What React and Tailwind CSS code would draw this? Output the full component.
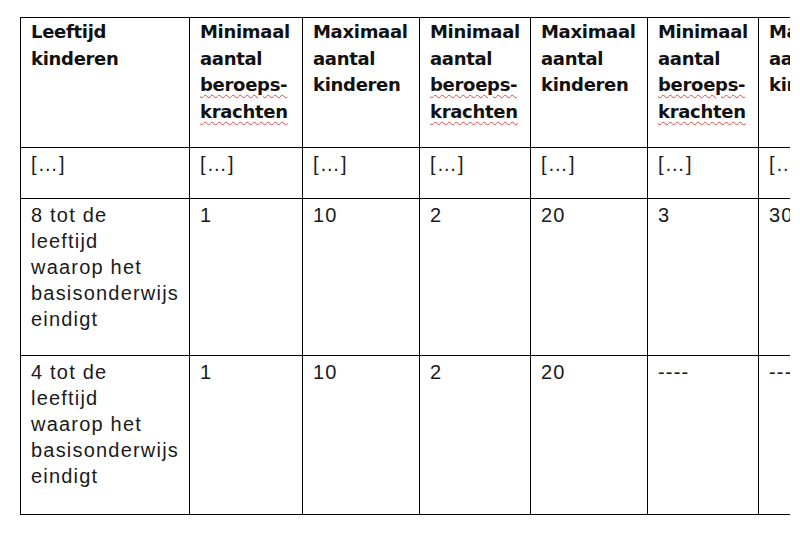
const cols = [169, 113, 117, 111, 117, 111, 113];

const headers = [
  ["Leeftijd", "kinderen"],
  ["Minimaal", "aantal", "beroeps-*", "krachten*"],
  ["Maximaal", "aantal", "kinderen"],
  ["Minimaal", "aantal", "beroeps-*", "krachten*"],
  ["Maximaal", "aantal", "kinderen"],
  ["Minimaal", "aantal", "beroeps-*", "krachten*"],
  ["Maximaal", "aantal", "kinderen"],
];

const rows = [
  { h: 51, cells: [["[…]"], ["[…]"], ["[…]"], ["[…]"], ["[…]"], ["[…]"], ["[…]"]] },
  {
    h: 157,
    cells: [
      ["8 tot de", "leeftijd", "waarop het", "basisonderwijs", "eindigt"],
      ["1"],
      ["10"],
      ["2"],
      ["20"],
      ["3"],
      ["30"],
    ],
  },
  {
    h: 159,
    cells: [
      ["4 tot de", "leeftijd", "waarop het", "basisonderwijs", "eindigt"],
      ["1"],
      ["10"],
      ["2"],
      ["20"],
      ["----"],
      ["----"],
    ],
  },
];

function HeadLine({ text }) {
  // trailing * marks a word with a spellcheck squiggle
  if (text.endsWith("*")) {
    return (
      <div>
        <span className="underline decoration-wavy decoration-[#e04848] decoration-[1px] underline-offset-[3px]">
          {text.slice(0, -1)}
        </span>
      </div>
    );
  }
  return <div>{text}</div>;
}

export default function App() {
  return (
    <div className="w-[800px] h-[542px] bg-white pl-[20px] pt-[17px]">
      <div className="w-[770px] overflow-hidden">
        <table
          className="table-fixed border-collapse text-[#111]"
          style={{ width: cols.reduce((a, b) => a + b, 0) }}
        >
          <colgroup>
            {cols.map((w, i) => (
              <col key={i} style={{ width: w }} />
            ))}
          </colgroup>
          <thead>
            <tr className="h-[130px]">
              {headers.map((lines, i) => (
                <th
                  key={i}
                  className="border-[1.5px] border-black align-top text-left px-[10px] pt-[1px] font-bold text-[18px] leading-[26.5px] font-['DejaVu_Sans',sans-serif] tracking-[-0.3px]"
                >
                  {lines.map((t, j) => (
                    <HeadLine key={j} text={t} />
                  ))}
                </th>
              ))}
            </tr>
          </thead>
          <tbody>
            {rows.map((r, i) => (
              <tr key={i} style={{ height: r.h }}>
                {r.cells.map((lines, j) => (
                  <td
                    key={j}
                    className="border-[1.5px] border-black align-top px-[10px] pt-[3px] text-[20px] leading-[26px] font-['Liberation_Sans',Arial,sans-serif] tracking-[1.2px] text-[#1a1a1a]"
                  >
                    {lines.map((t, k) => (
                      <div key={k}>{t}</div>
                    ))}
                  </td>
                ))}
              </tr>
            ))}
          </tbody>
        </table>
      </div>
    </div>
  );
}
